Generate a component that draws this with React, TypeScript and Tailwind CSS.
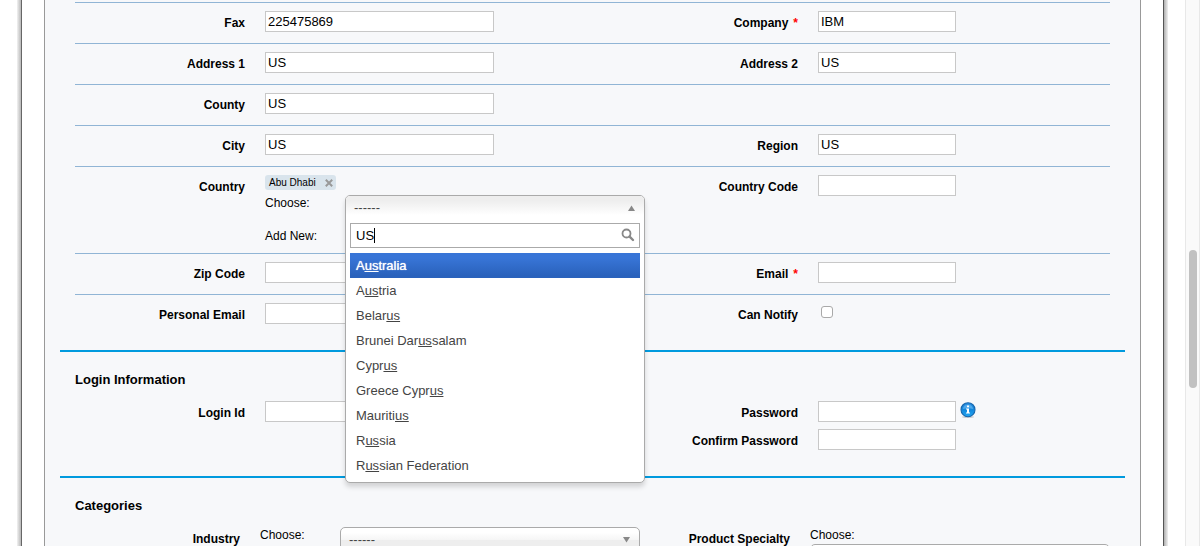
import React, { useState } from "react";
import type { ReactNode } from "react";

const inputClass =
  "block h-[21px] border border-[#c8c8c8] bg-white px-[2px] text-[13px] leading-[19px] text-black outline-none";

function Label({ id, text, required }: { id: string; text: string; required?: boolean }) {
  return (
    <label htmlFor={id} className="w-[170px] shrink-0 pt-1 text-right text-xs leading-4 font-bold">
      {text}
      {required && <span className="ml-[5px] text-[#ff0000]">*</span>}
    </label>
  );
}

type FieldProps = {
  id: string;
  label: string;
  value?: string;
  required?: boolean;
  wide?: boolean;
  type?: string;
  children?: ReactNode;
};

function Field({ id, label, value = "", required, wide, type = "text", children }: FieldProps) {
  return (
    <div className="flex items-start gap-5">
      <Label id={id} text={label} required={required} />
      <div className="flex">
        <input
          id={id}
          type={type}
          defaultValue={value}
          className={`${inputClass} ${wide ? "w-[229px]" : "w-[138px]"}`}
        />
        {children}
      </div>
    </div>
  );
}

function Row({ children, className = "pb-[11px]" }: { children: ReactNode; className?: string }) {
  return (
    <div
      className={`mx-[30px] grid grid-cols-[minmax(0,553fr)_minmax(0,482fr)] border-t border-[#91b5d5] pt-2 ${className}`}
    >
      {children}
    </div>
  );
}

const countries = [
  "Australia",
  "Austria",
  "Belarus",
  "Brunei Darussalam",
  "Cyprus",
  "Greece Cyprus",
  "Mauritius",
  "Russia",
  "Russian Federation",
];

function Match({ name, query }: { name: string; query: string }) {
  const at = query ? name.toLowerCase().indexOf(query.toLowerCase()) : -1;
  if (at < 0) return <>{name}</>;
  return (
    <>
      {name.slice(0, at)}
      <span className="underline">{name.slice(at, at + query.length)}</span>
      {name.slice(at + query.length)}
    </>
  );
}

function CountryMenu() {
  const [query, setQuery] = useState("US");
  const shown = countries.filter((c) => c.toLowerCase().includes(query.toLowerCase()));
  return (
    <div className="absolute top-0 left-0 z-10 w-[300px] rounded-[5px] border border-[#aaa] bg-white pb-1 shadow-[0_4px_5px_rgba(0,0,0,0.15)]">
      <button
        type="button"
        aria-expanded="true"
        className="flex h-6 w-full items-center justify-between rounded-t-[4px] bg-linear-to-b from-[#eee] from-20% to-white to-80% pr-[9px] pl-2 text-[13px] leading-6 text-[#444]"
      >
        <span>------</span>
        <svg width="7" height="6" viewBox="0 0 7 6" aria-hidden="true">
          <path d="M3.5 0.5 L7 6 H0 Z" fill="#888" />
        </svg>
      </button>
      <div className="relative mx-1 mt-[3px]">
        <input
          aria-label="Search countries"
          value={query}
          onChange={(e) => setQuery(e.target.value)}
          className="block h-[25px] w-full border border-[#aaa] bg-white pr-6 pl-[5px] text-[13px] leading-[23px] text-black outline-none"
        />
        {query === "US" && <span className="absolute top-[5px] left-[24px] h-[15px] w-px bg-black" />}
        <svg className="absolute top-[5px] right-[5px]" width="14" height="14" viewBox="0 0 14 14" aria-hidden="true">
          <circle cx="5.5" cy="5.5" r="4" fill="none" stroke="#888" strokeWidth="1.8" />
          <path d="M8.6 8.6 L12 12" stroke="#888" strokeWidth="2.4" strokeLinecap="round" />
        </svg>
      </div>
      <ul role="listbox" aria-label="Countries" className="mx-1 mt-[5px]">
        {shown.map((name, i) => (
          <li
            key={name}
            role="option"
            aria-selected={i === 0}
            className={`h-[25px] px-[6px] text-[13px] leading-[25px] ${
              i === 0
                ? "bg-linear-to-b from-[#3875d7] from-20% to-[#2a62bc] to-90% text-white [text-shadow:0_0_1px_white]"
                : "text-[#444]"
            }`}
          >
            <Match name={name} query={query} />
          </li>
        ))}
      </ul>
    </div>
  );
}

function ClosedSelect({ label }: { label: string }) {
  return (
    <button
      type="button"
      aria-label={label}
      className="flex h-[25px] w-[300px] items-center justify-between rounded-[5px] border border-[#aaa] bg-linear-to-b from-white from-20% via-[#f6f6f6] via-50% to-[#eee] to-52% pr-[9px] pl-2 text-[13px] leading-6 text-[#444]"
    >
      <span>------</span>
      <svg width="7" height="6" viewBox="0 0 7 6" aria-hidden="true">
        <path d="M0 0 H7 L3.5 5.5 Z" fill="#888" />
      </svg>
    </button>
  );
}

function InfoIcon() {
  return (
    <svg className="mt-px ml-1" width="16" height="16" viewBox="0 0 16 16" aria-label="Password help" role="img">
      <defs>
        <linearGradient id="info-fill" x1="0" y1="0" x2="0" y2="1">
          <stop offset="0" stopColor="#2d8fe0" />
          <stop offset="0.5" stopColor="#1287dc" />
          <stop offset="1" stopColor="#22a6f2" />
        </linearGradient>
      </defs>
      <ellipse cx="8" cy="15" rx="6" ry="1" fill="#c8cdd2" />
      <circle cx="8" cy="7.7" r="7" fill="url(#info-fill)" stroke="#1767ae" strokeWidth="1.1" />
      <path d="M2.8 7 A5.3 5.3 0 0 1 13.2 7 Q8 5.4 2.8 7Z" fill="#7cc3f5" opacity="0.55" />
      <path d="M7 3.6 H9 V5.2 H7Z M6 6.4 H9 V10.4 H10 V11.6 H6 V10.4 H7 V7.6 H6Z" fill="#fff" />
    </svg>
  );
}

function SectionTitle({ children }: { children: ReactNode }) {
  return <h2 className="px-[15px] text-[13px] leading-4 font-bold">{children}</h2>;
}

export default function App() {
  return (
    <div className="flex h-screen overflow-hidden bg-white font-['Liberation_Sans',Arial,sans-serif] text-black">
      <div className="w-[17px] shrink-0" />
      <div className="w-1 shrink-0 bg-linear-to-r from-[#f2f2f2] to-[#b8b8b8]" />
      <main className="flex min-w-0 flex-1 border-x border-l-[#666] border-r-[#555] px-[22px]">
        <form className="min-w-0 flex-1 border-x border-[#999] bg-[#f7f8fa] pt-[2px]" onSubmit={(e) => e.preventDefault()}>
          <Row>
            <Field id="fax" label="Fax" value="225475869" wide />
            <Field id="company" label="Company" value="IBM" required />
          </Row>
          <Row>
            <Field id="address1" label="Address 1" value="US" wide />
            <Field id="address2" label="Address 2" value="US" />
          </Row>
          <Row>
            <Field id="county" label="County" value="US" wide />
          </Row>
          <Row>
            <Field id="city" label="City" value="US" wide />
            <Field id="region" label="Region" value="US" />
          </Row>
          <Row className="pb-[5px]">
            <div className="flex items-start gap-5">
              <Label id="country-new" text="Country" />
              <div className="text-xs leading-4">
                <div className="flex h-[15px] w-[71px] items-center justify-between rounded-[3px] bg-[#d9e4ec] pr-[3px] pl-1 text-[10px] leading-[15px]">
                  <span>Abu Dhabi</span>
                  <button type="button" aria-label="Remove Abu Dhabi">
                    <svg className="block" width="8" height="8" viewBox="0 0 8 8">
                      <path d="M0.8 0.8 L7.2 7.2 M7.2 0.8 L0.8 7.2" stroke="#999" strokeWidth="2" />
                    </svg>
                  </button>
                </div>
                <div className="mt-[5px] flex h-8">
                  <span className="w-20">Choose:</span>
                  <div className="relative w-[300px]">
                    <CountryMenu />
                  </div>
                </div>
                <div className="flex">
                  <label htmlFor="country-new" className="w-20 pt-px">
                    Add New:
                  </label>
                  <input id="country-new" className={`${inputClass} w-[138px]`} />
                </div>
              </div>
            </div>
            <Field id="country-code" label="Country Code" />
          </Row>
          <Row>
            <Field id="zip" label="Zip Code" wide />
            <Field id="email" label="Email" required />
          </Row>
          <Row className="pb-[26px]">
            <Field id="personal-email" label="Personal Email" wide />
            <div className="flex items-start gap-5">
              <Label id="notify" text="Can Notify" />
              <input
                id="notify"
                type="checkbox"
                className="mt-[3px] ml-[3px] h-3 w-3 appearance-none rounded-[3px] border border-[#a9a9a9] bg-white checked:bg-[#3875d7]"
              />
            </div>
          </Row>

          <section className="mx-[15px] border-t-2 border-[#009ade] pt-5 pb-[26px]">
            <SectionTitle>Login Information</SectionTitle>
            <div className="mx-[15px] mt-[13px] grid grid-cols-[minmax(0,553fr)_minmax(0,482fr)]">
              <Field id="login" label="Login Id" wide />
              <div className="flex flex-col gap-[7px]">
                <Field id="password" label="Password" type="password">
                  <InfoIcon />
                </Field>
                <Field id="confirm" label="Confirm Password" type="password" />
              </div>
            </div>
          </section>

          <section className="mx-[15px] border-t-2 border-[#009ade] pt-5">
            <SectionTitle>Categories</SectionTitle>
            <div className="mx-[10px] mt-[13px] grid grid-cols-[minmax(0,550fr)_minmax(0,495fr)] text-xs leading-4">
              <div className="flex items-start gap-5">
                <span className="w-[170px] shrink-0 pt-1 text-right font-bold">Industry</span>
                <div className="flex shrink-0">
                  <span className="w-20">Choose:</span>
                  <ClosedSelect label="Industry" />
                </div>
              </div>
              <div className="flex items-start gap-5">
                <span className="w-[170px] shrink-0 pt-1 text-right font-bold">Product Specialty</span>
                <div>
                  <div className="mb-px">Choose:</div>
                  <ClosedSelect label="Product Specialty" />
                </div>
              </div>
            </div>
          </section>
        </form>
      </main>
      <div className="w-1 shrink-0 bg-linear-to-r from-[#b0b0b0] to-[#f0f0f0]" />
      <div className="w-[17px] shrink-0" />
      <div className="w-[15px] shrink-0 border-x border-[#e8e8e8] bg-[#fafafa] px-[3px] pt-[250px]">
        <div className="h-[138px] w-2 rounded-full bg-[#c1c1c1]" />
      </div>
    </div>
  );
}
